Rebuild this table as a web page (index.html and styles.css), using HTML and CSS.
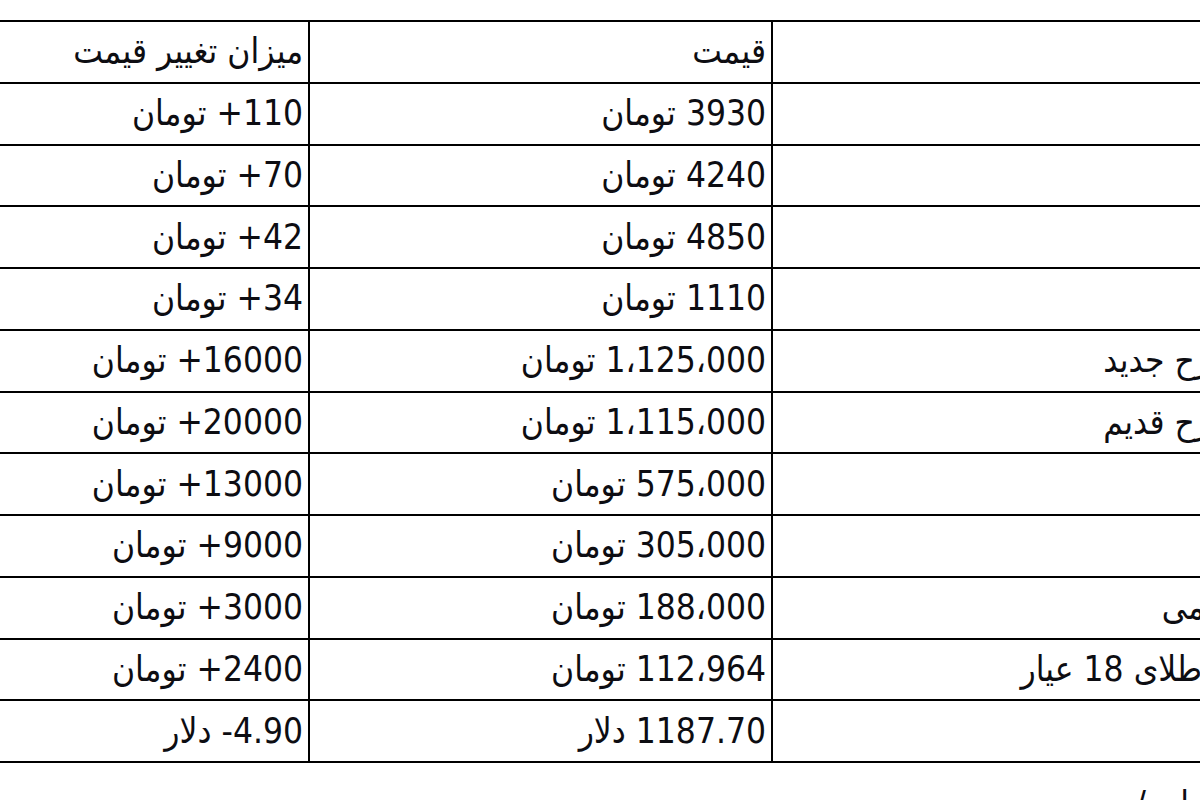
FILE: index.html
```html
<!DOCTYPE html>
<html lang="fa">
<head>
<meta charset="utf-8">
<title>قیمت طلا و ارز</title>
<link rel="stylesheet" href="styles.css">
</head>
<body>
<div class="page">
  <table class="rates" dir="rtl">
    <colgroup>
      <col class="c-name">
      <col class="c-price">
      <col class="c-change">
    </colgroup>
    <tr><td>عنوان</td><td>قیمت</td><td>میزان تغییر قیمت</td></tr>
    <tr><td>دلار</td><td>3930 تومان</td><td>110+ تومان</td></tr>
    <tr><td>یورو</td><td>4240 تومان</td><td>70+ تومان</td></tr>
    <tr><td>پوند</td><td>4850 تومان</td><td>42+ تومان</td></tr>
    <tr><td>درهم</td><td>1110 تومان</td><td>34+ تومان</td></tr>
    <tr><td>سکه طرح جدید</td><td>1،125،000 تومان</td><td>16000+ تومان</td></tr>
    <tr><td>سکه طرح قدیم</td><td>1،115،000 تومان</td><td>20000+ تومان</td></tr>
    <tr><td>نیم‌سکه</td><td>575،000 تومان</td><td>13000+ تومان</td></tr>
    <tr><td>ربع‌سکه</td><td>305،000 تومان</td><td>9000+ تومان</td></tr>
    <tr><td>سکه گرمی</td><td>188،000 تومان</td><td>3000+ تومان</td></tr>
    <tr><td>هر گرم طلای 18 عیار</td><td>112،964 تومان</td><td>2400+ تومان</td></tr>
    <tr><td>اونس</td><td>1187.70 دلار</td><td>4.90- دلار</td></tr>
  </table>
  <p class="note" dir="rtl">جدول&nbsp; /</p>
</div>
</body>
</html>
```

FILE: styles.css
```css
html, body {
  margin: 0;
  padding: 0;
  background: #ffffff;
}

body {
  width: 1200px;
  height: 800px;
  overflow: hidden;
  font-family: "DejaVu Sans Condensed", "DejaVu Sans", "Noto Sans", sans-serif;
  color: #0d0d12;
}

.page {
  margin-left: -200px;
  width: 1520px;
  padding-top: 20px;
}

.rates {
  border-collapse: collapse;
  table-layout: fixed;
  width: 1513px;
  font-size: 35px;
}

.c-name { width: 542px; }
.c-price { width: 463px; }
.c-change { width: 508px; }

.rates td {
  border: 2px solid #000000;
  height: 59.75px;
  padding: 0 5px 0 0;
  text-align: right;
  vertical-align: middle;
  white-space: nowrap;
  overflow: hidden;
  line-height: 1;
}

.note {
  margin: 24px 0 0 0;
  width: 1440px;
  text-align: right;
  font-size: 35px;
  line-height: 1;
}
```
